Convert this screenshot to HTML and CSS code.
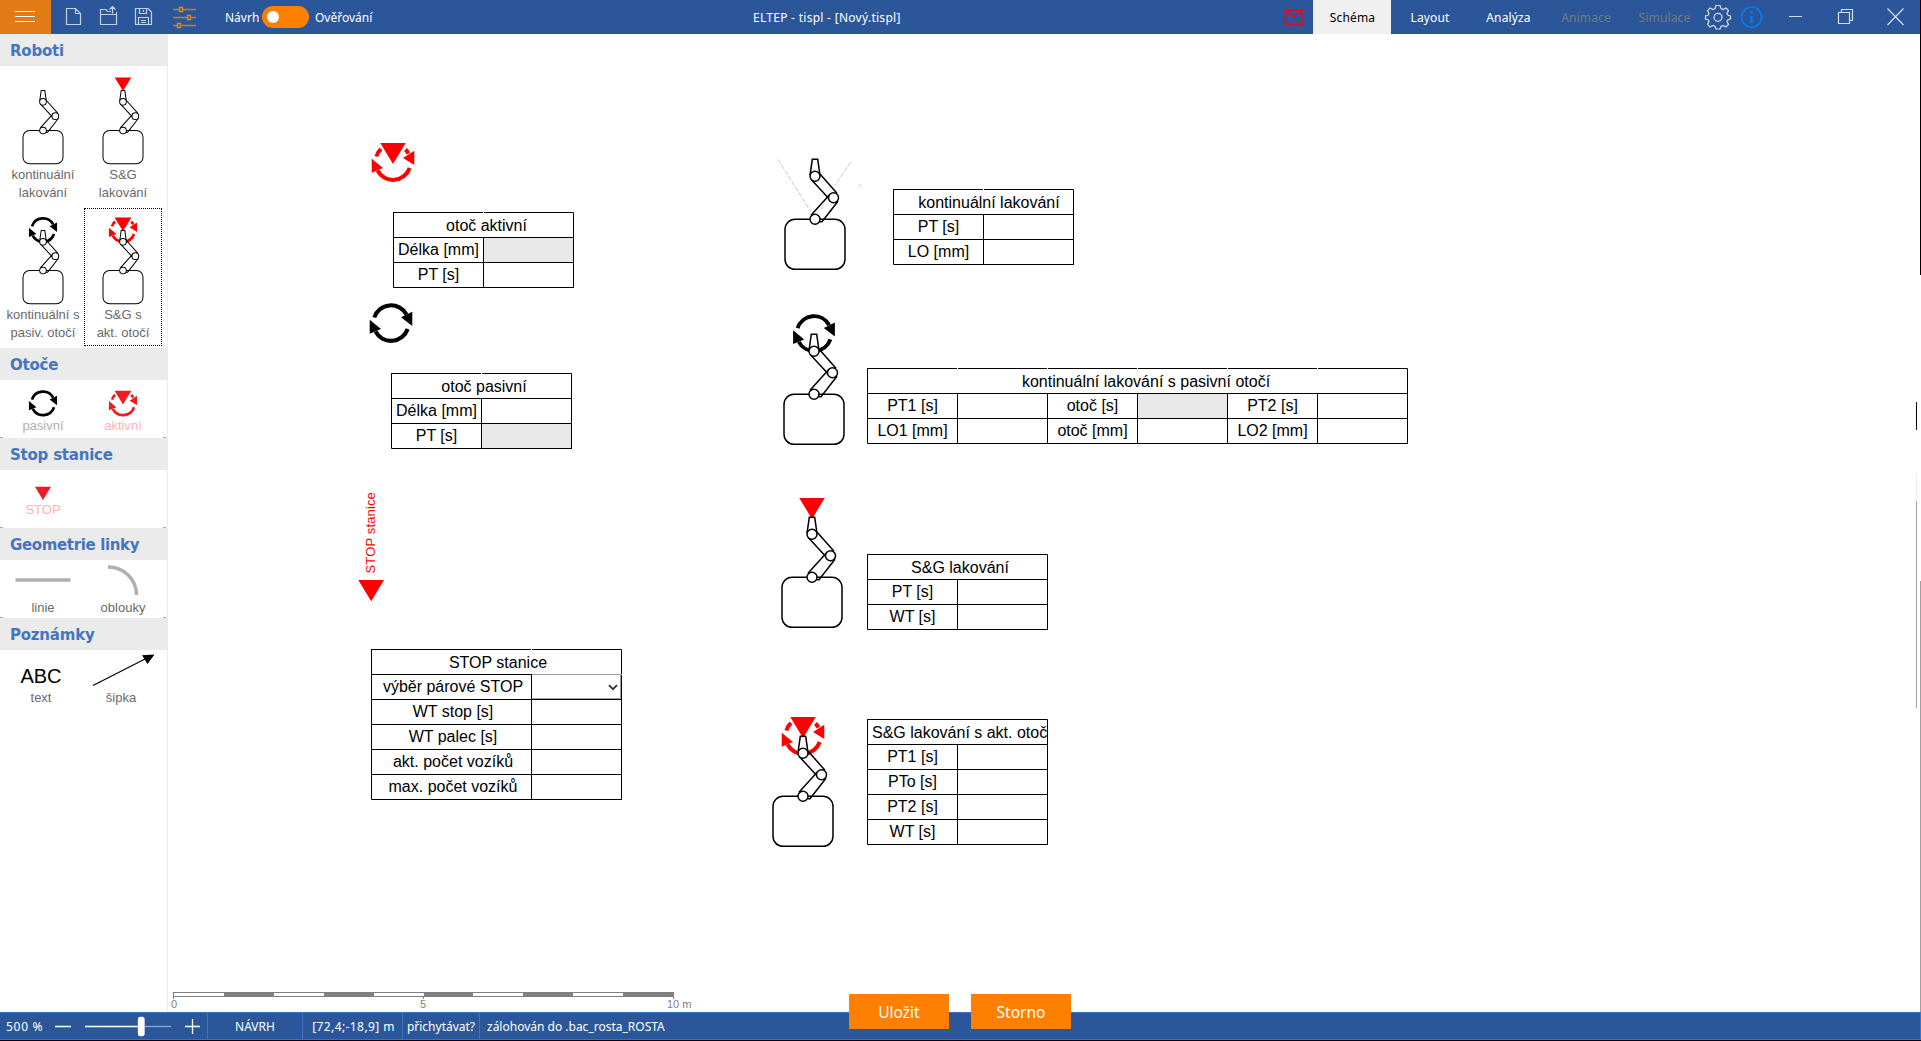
FILE: index.html
```
<!DOCTYPE html>
<html lang="cs">
<head>
<meta charset="utf-8">
<title>ELTEP - tispl - [Nový.tispl]</title>
<link rel="stylesheet" href="styles.css">
</head>
<body>
<svg class="defs" width="0" height="0">
  <defs>
    <g id="robot" fill="none" stroke="currentColor">
      <rect x="-30" y="0" width="60" height="50" rx="10"/>
      <path d="M-5-44-2.700-60H2.700L5-44M5.200-45 22-26M-4-40 14-20.500M-4-4 15-25M4.500 2.500H7L23-18"/>
      <circle cx="0" cy="-43" r="5" fill="#fff"/>
      <circle cx="18.500" cy="-21.500" r="5" fill="#fff"/>
      <circle cx="0" cy="0" r="5" fill="#fff"/>
    </g>
    <g id="spin">
      <path d="M-16.700-5.500A17.600 17.600 0 0 1 15.500-8.500M16.700 6A17.600 17.600 0 0 1-15.500 8.500" fill="none" stroke="currentColor" stroke-width="4"/>
      <path d="M21.300-11.300V3L10-5.700ZM-21.300-3.300V10.700L-10 6Z" fill="currentColor"/>
    </g>
    <g id="spin-active">
      <path d="M-16.700-5.500A17.600 17.600 0 0 1-12-13M12.500-12.500A17.600 17.600 0 0 1 15.500-8.500M16.700 6A17.600 17.600 0 0 1-15.500 8.500" fill="none" stroke="currentColor" stroke-width="4"/>
      <path d="M21.300-11.300V3L10-4ZM-21.300-3.300V10.700L-10 6ZM-12.700-19H12.700L0 2Z" fill="currentColor"/>
    </g>
  </defs>
</svg>
<div class="app">
  <header class="topbar">
    <div class="menu"><i></i><i></i><i></i></div>
    <svg class="tools" width="160" height="34" fill="none" stroke="#c3d0e6" stroke-width="1.200">
      <path d="M15.500 8.500H24.500L29.500 13.500V24.500H15.500ZM24.500 8.500V13.500H29.500"/>
      <path d="M49.500 14.500H65.500V24.500H49.500ZM49.500 14.500V9.500H55L56.500 11.500H60M65.500 14.500V12M61.500 13.500V6.500M58.500 9.500 61.500 6.500 64.500 9.500"/>
      <path d="M84.500 8.500H97L100.500 12V24.500H84.500ZM88.500 8.500V13.500H95.500V8.500M87.500 24.500V17.500H97.500V24.500M92.500 10V12M90 20.500H95M90 22.500H95"/>
      <g stroke="#c77d33" stroke-width="1.300"><path d="M122 9.500H128M132 9.500H145M122 17.500H136.500M140.500 17.500H145M122 25.500H126.500M130.500 25.500H145"/><path stroke="#ff8000" d="M128.500 7.500H131.500V11.500H128.500ZM136.500 15.500H139.500V19.500H136.500ZM126.500 23.500H129.500V27.500H126.500Z"/></g>
    </svg>
    <span class="mode t-navrh">Návrh</span><span class="toggle"><b></b></span><span class="mode t-over">Ověřování</span>
    <div class="title"><span>ELTEP - tispl - [Nový.tispl]</span></div>
    <svg class="mail" width="29" height="34" fill="none" stroke="#d80f26" stroke-width="1.800"><path d="M1.500 10H18V24.500H1.500ZM2 10.500 9.700 17 17.500 10.500"/></svg>
    <nav class="tabs"><span class="tab active">Schéma</span><span class="tab layout">Layout</span><span class="tab analysis">Analýza</span><span class="tab off anim">Animace</span><span class="tab off simu">Simulace</span></nav>
    <svg class="window" width="221" height="34" fill="none" stroke="#d5deec" stroke-width="1.200">
      <g transform="translate(1 0)"><path d="M16 5.500H20L21 8.500 23 9.500 26 8 28.500 10.500 27 13.500 28 15.200 30.500 16V19L28 19.800 27 21.500 28.500 24.500 26 27 23 25.500 21 26.500 20 29H16L15 26.500 13 25.500 10 27 7.500 24.500 9 21.500 8 19.800 5.500 19V16L8 15.200 9 13.500 7.500 10.500 10 8 13 9.500 15 8.500Z"/><circle cx="18" cy="17.300" r="4"/>
      <circle cx="51.500" cy="17" r="10" stroke="#0a78f0" stroke-width="1.700"/><path d="M51.500 16V23M51.500 11V13.500" stroke="#0a78f0" stroke-width="2.500"/>
      <path d="M89 16.500H102M138.500 12.500H149.500V23.500H138.500ZM141.500 12V9.500H152.500V20.500H150M187.500 8.500 203.500 25M203.500 8.500 187.500 25"/></g>
    </svg>
  </header>

  <main class="work">
    <aside class="side">
      <h2>Roboti</h2>
      <div class="group robots">
        <div class="item"><svg width="80" height="100"><use href="#robot" stroke-width="1.500" transform="translate(40 64.500) scale(.667)"/></svg><p>kontinuální<br>lakování</p></div>
        <div class="item"><svg width="80" height="100"><path d="M31.700 11.500H48.300L40 25Z" fill="#f00"/><use href="#robot" stroke-width="1.500" transform="translate(40 64.500) scale(.667)"/></svg><p>S&amp;G<br>lakování</p></div>
        <div class="item"><svg width="80" height="100"><use href="#spin" transform="translate(40 24) scale(.66)"/><use href="#robot" stroke-width="1.500" transform="translate(40 64.500) scale(.667)"/></svg><p>kontinuální s<br>pasiv. otočí</p></div>
        <div class="item selected"><svg width="80" height="100"><use href="#spin-active" color="#f00" transform="translate(40 24) scale(.66)"/><use href="#robot" stroke-width="1.500" transform="translate(40 64.500) scale(.667)"/></svg><p>S&amp;G s<br>akt. otočí</p></div>
      </div>
      <h2>Otoče</h2>
      <div class="group small">
        <div class="item gray"><svg width="80" height="37"><use href="#spin" transform="translate(40 23.300) scale(.66)"/></svg><p>pasivní</p></div>
        <div class="item pink"><svg width="80" height="37"><use href="#spin-active" color="#ed1c24" transform="translate(40 23.300) scale(.66)"/></svg><p>aktivní</p></div>
      </div>
      <h2>Stop stanice</h2>
      <div class="group small">
        <div class="item pink"><svg width="80" height="31"><path d="M32 16.700H48L40 30Z" fill="#ed1c24"/></svg><p>STOP</p></div>
      </div>
      <h2 class="wide">Geometrie linky</h2>
      <div class="group small">
        <div class="item"><svg width="80" height="39"><path d="M12.500 20H67.500" stroke="#b0b0b0" stroke-width="3.500"/></svg><p>linie</p></div>
        <div class="item"><svg width="80" height="39"><path d="M25 7A28 28 0 0 1 53.500 35" fill="none" stroke="#b0b0b0" stroke-width="3.500"/></svg><p>oblouky</p></div>
      </div>
      <h2>Poznámky</h2>
      <div class="group notes">
        <div class="item"><div class="abc">ABC</div><p>text</p></div>
        <div class="item"><svg width="80" height="39"><path d="M12 35.500 66 8" stroke="#000" stroke-width="1.200"/><path d="M73.500 4.500 61 5.300 66.500 14Z"/></svg><p>šipka</p></div>
      </div>
    </aside>

    <section class="canvas">
      <svg class="drawing" width="1753" height="978" viewBox="168 34 1753 978">
        <use href="#spin-active" color="#f00" transform="translate(393 162)"/>
        <use href="#spin" transform="translate(391 323)"/>
        <path d="M358.300 580H384L371.200 601.300ZM799.300 498H824.700L812 519Z" fill="#f00"/>
        <path d="M778 159.500 811 212M850.500 162 835 186M821 209 824 204M859 187 861 184" stroke="#bbb" stroke-width=".8" stroke-dasharray="5 1.500"/>
        <use href="#robot" stroke-width="1.500" transform="translate(815 219.300)"/>
        <use href="#spin" transform="translate(814 333.500) scale(.98)"/>
        <use href="#robot" stroke-width="1.500" transform="translate(814 394.300)"/>
        <use href="#robot" stroke-width="1.500" transform="translate(812 577.300)"/>
        <use href="#spin-active" color="#f00" transform="translate(803 736)"/>
        <use href="#robot" stroke-width="1.500" transform="translate(803 796.300)"/>
      </svg>
      <div class="vertical">STOP stanice</div>

      <div class="grid two t1"><div class="head">otoč aktivní</div><div>Délka [mm]</div><div class="locked"></div><div>PT [s]</div><div></div></div>
      <div class="grid two t2"><div class="head">otoč pasivní</div><div>Délka [mm]</div><div></div><div>PT [s]</div><div class="locked"></div></div>
      <div class="grid stop t3"><div class="head">STOP stanice</div><div>výběr párové STOP</div><div class="select"><svg width="10" height="7"><path d="M1 1.200 5 5.200 9 1.200" fill="none" stroke="#333" stroke-width="1.800"/></svg></div><div>WT stop [s]</div><div></div><div>WT palec [s]</div><div></div><div>akt. počet vozíků</div><div></div><div>max. počet vozíků</div><div></div></div>
      <div class="grid two t4"><div class="head">kontinuální lakování</div><div>PT [s]</div><div></div><div>LO [mm]</div><div></div></div>
      <div class="grid six t5"><div class="head">kontinuální lakování s pasivní otočí</div><div>PT1 [s]</div><div></div><div>otoč [s]</div><div class="locked"></div><div>PT2 [s]</div><div></div><div>LO1 [mm]</div><div></div><div>otoč [mm]</div><div></div><div>LO2 [mm]</div><div></div></div>
      <div class="grid two t6"><div class="head">S&amp;G lakování</div><div>PT [s]</div><div></div><div>WT [s]</div><div></div></div>
      <div class="grid two t7"><div class="head">S&amp;G lakování s akt. otoč</div><div>PT1 [s]</div><div></div><div>PTo [s]</div><div></div><div>PT2 [s]</div><div></div><div>WT [s]</div><div></div></div>

      <div class="ruler">
        <div class="scale"><i></i><i></i><i></i><i></i><i></i><i></i><i></i><i></i><i></i><i></i></div>
        <div class="marks"><span>0</span><span>5</span><span>10 m</span></div>
      </div>
      <div class="edge e1"></div><div class="edge e2"></div><div class="edge e3"></div><div class="edge e4"></div><div class="edge e5"></div>
    </section>
  </main>

  <footer class="status">
    <div class="zoom"><span class="z">500 %</span>
      <svg width="155" height="27" fill="none" stroke="#fff" stroke-width="1.300"><path d="M3 13.500H19M133 13.500H148M140.500 6V21M33 13.500H86"/><path d="M92 13.500H119" stroke="#8fa8d0"/><rect x="86.500" y="4.500" width="5.500" height="18" rx="2" fill="#fff"/></svg>
    </div>
    <div class="s-mode"><span>NÁVRH</span></div><div class="s-pos"><span>[72,4;-18,9] m</span></div><div class="s-snap"><span>přichytávat?</span></div><div class="s-bak"><span>zálohován do .bac_rosta_ROSTA</span></div>
  </footer>
  <div class="actions"><button>Uložit</button><button>Storno</button></div>
</div>
</body>
</html>
```
FILE: styles.css
```
* { box-sizing: border-box; }
body { margin: 0; background: #fff; font-family: "Liberation Sans", sans-serif; }
.defs { position: absolute; }
.app { position: relative; width: 1921px; height: 1041px; overflow: hidden; display: flex; flex-direction: column; }
svg { display: block; flex: none; }

.topbar, .status, .actions button { font-family: "Noto Sans", sans-serif; font-size: 12px; color: #fff; }
.topbar { height: 34px; flex: none; display: flex; align-items: center; background: #2b579a; border-right: 1px solid #000; white-space: nowrap; }
.menu { width: 51px; height: 34px; background: #e27b17; display: flex; flex-direction: column; align-items: flex-start; padding: 11px 0 0 15px; gap: 4px; }
.menu i { width: 20px; height: 1px; background: #fff; }
.t-navrh { width: 37px; margin-left: 14px; }
.t-over { width: 60px; }
.toggle { width: 47px; height: 22px; border-radius: 11px; background: #ff8000; padding: 5px; margin-right: 6px; }
.toggle b { display: block; width: 12px; height: 12px; border-radius: 50%; background: #fff; }
.title { flex: 1; padding-left: 378px; letter-spacing: .28px; }
.tabs { display: flex; height: 34px; width: 386px; }
.tab { flex: none; line-height: 35px; text-align: center; letter-spacing: .15px; }
.tab.active { width: 78px; padding-left: 1px; background: #f0f0f0; color: #000; }
.layout { width: 78px; }
.analysis { width: 79px; }
.anim { width: 76px; }
.simu { width: 81px; }
.tab.off { color: #76797d; }

.work { flex: 1; min-height: 0; display: flex; }
.side { width: 168px; height: 978px; border-right: 1px solid #ebebeb; }
.side h2 { margin: 0; width: 168px; height: 32px; padding-left: 10px; background: #ebebeb; color: #4475bf; font: bold 15px/34px "DejaVu Sans", sans-serif; letter-spacing: -.22px; }
.side h2.wide { letter-spacing: -.35px; }
.group { display: flex; flex-wrap: wrap; align-content: flex-start; padding-left: 3px; }
.item { width: 80px; position: relative; }
.item p { margin: 0; font-size: 13px; line-height: 18px; text-align: center; color: #6a6a6a; white-space: nowrap; }
.robots { height: 282px; }
.robots .item { height: 140px; }
.small { height: 58px; position: relative; }
.small::before, .small::after { content: ""; position: absolute; bottom: 0; height: 1px; width: 3px; background: #aaa; }
.small::before { left: 0; }
.small::after { right: 1px; }
.notes { padding-left: 1px; }
.selected::after { content: ""; position: absolute; inset: 2px 1px 0 1px; border: 1px dotted #000; }
.item.gray p { color: #b0b0b0; }
.item.pink p { color: #ffb3b6; }
.abc { height: 39px; padding-top: 15px; font-size: 20px; line-height: 23px; text-align: center; }

.canvas { position: relative; flex: 1; }
.drawing { position: absolute; left: 0; top: 0; }
.vertical { position: absolute; left: 195px; top: 458px; width: 16px; line-height: 16px; font-size: 13px; letter-spacing: .15px; color: #f00; writing-mode: vertical-rl; transform: rotate(180deg); white-space: nowrap; }

.grid { position: absolute; display: grid; grid-auto-rows: 25px; border: 1px solid #000; border-right: 0; border-bottom: 0; border-radius: 1px; font-size: 16px; line-height: 24px; text-align: center; white-space: nowrap; }
.grid > div { position: relative; border-right: 1px solid #000; border-bottom: 1px solid #000; height: 25px; }
.two { grid-template-columns: 90px 90px; }
.six { grid-template-columns: repeat(6, 90px); }
.stop { grid-template-columns: 160px 90px; }
.grid > .head { grid-column: 1 / -1; line-height: 25px; }
.head::before { content: ""; position: absolute; top: -1px; left: 0; right: 1px; height: 1px; background: repeating-linear-gradient(90deg, transparent 0 89px, #fff 89px 90px); }
.stop .head::before { left: 159px; width: 1px; background: #fff; }
.t6 .head::before { display: none; }
.grid > .locked { background: #e8e8e8; }
.t1 { left: 225px; top: 178px; } .t1 .head { padding-left: 6px; }
.t2 { left: 223px; top: 339px; } .t2 .head { padding-left: 5px; }
.t3 { left: 203px; top: 615px; } .t3 > div { padding-left: 3px; }
.t4 { left: 725px; top: 155px; } .t4 .head { padding-left: 11px; }
.t5 { left: 699px; top: 334px; } .t5 .head { padding-left: 17px; }
.t6 { left: 699px; top: 520px; } .t6 .head { padding-left: 5px; }
.t7 { left: 699px; top: 685px; } .t7 .head { padding-left: 4px; text-align: left; overflow: hidden; }
.select { display: flex; align-items: center; justify-content: flex-end; padding-right: 3px; box-shadow: inset -1px -1px #a0a0a0, 0 -1px #a0a0a0; }

.ruler { position: absolute; left: 5px; top: 958px; width: 530px; color: #808080; }
.scale { display: flex; width: 501px; height: 5px; border: 1px solid #808080; }
.scale i { flex: 1; }
.scale i:nth-child(even) { background: #808080; }
.marks { display: flex; font-size: 11px; line-height: 13px; }
.marks span { width: 250px; padding-top: 1px; position: relative; white-space: nowrap; text-indent: -2px; }
.marks span:nth-child(2) { width: 244px; text-indent: -3px; }
.marks span:nth-child(3) { width: 30px; text-indent: 0; }
.marks span::before { content: ""; position: absolute; left: 0; top: 0; width: 1px; height: 2px; background: #808080; }
.marks span:nth-child(3)::before { left: 6px; }
.edge { position: absolute; width: 1px; }
.e1 { left: 1752px; top: 0; height: 241px; background: #000; }
.e2 { left: 1748px; top: 368px; height: 28px; background: #000; }
.e3 { left: 1748px; top: 440px; height: 27px; background: #ebebeb; }
.e4 { left: 1748px; top: 467px; height: 207px; background: #a0a0a0; }
.e5 { left: 1752px; top: 547px; height: 431px; background: #a0a0a0; }

.status { height: 29px; flex: none; display: flex; background: #2b579a; border-top: 1px solid #3b74c7; border-bottom: 1px solid #000; line-height: 28px; white-space: nowrap; }
.status > div { border-right: 1px solid #3b74c7; box-shadow: inset 0 -1px #3b74c7; height: 27px; }
.zoom { width: 208px; display: flex; padding-left: 6px; letter-spacing: .7px; }
.z { width: 47px; }
.s-mode { width: 95px; text-align: center; }
.s-pos { width: 100px; text-align: center; padding-left: 2px; letter-spacing: .4px; }
.s-snap { width: 77px; text-align: center; }
.s-bak { flex: 1; padding-left: 7px; }
.actions { position: absolute; left: 849px; top: 994px; display: flex; gap: 22px; }
.actions button { width: 100px; height: 35px; border: 0; padding: 0; background: #ff8000; font-size: 15.5px; line-height: 34px; }
```
